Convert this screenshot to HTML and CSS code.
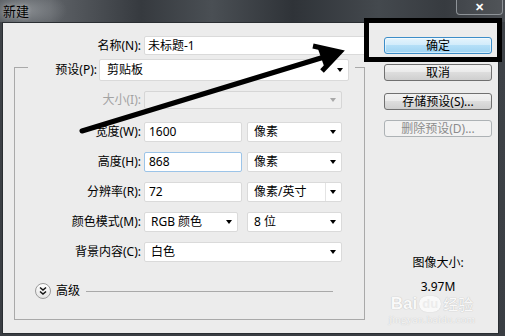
FILE: index.html
```html
<!DOCTYPE html>
<html lang="zh-CN">
<head>
<meta charset="utf-8">
<title>新建</title>
<link rel="stylesheet" href="styles.css">
</head>
<body>
<div class="window">
  <div class="titlebar">
    <span class="title">新建</span>
    <span class="close">✕</span>
  </div>
  <div class="client">
    <div class="main">
      <div class="row name-row">
        <span class="lbl lbl-wide">名称(N):</span>
        <div class="field name-field">未标题-1</div>
      </div>
      <div class="group">
        <div class="legend">
          <span class="legend-lbl">预设(P):</span>
          <div class="sel preset">剪贴板<i class="caret"></i></div>
        </div>
        <div class="row size-row">
          <span class="lbl disabled">大小(I):</span>
          <div class="sel sel-disabled w-full"><i class="caret caret-gray"></i></div>
        </div>
        <div class="row first-row">
          <span class="lbl">宽度(W):</span>
          <div class="field w-num">1600</div>
          <div class="sel w-unit">像素<i class="caret"></i></div>
        </div>
        <div class="row">
          <span class="lbl">高度(H):</span>
          <div class="field w-num focus">868</div>
          <div class="sel w-unit">像素<i class="caret"></i></div>
        </div>
        <div class="row">
          <span class="lbl">分辨率(R):</span>
          <div class="field w-num">72</div>
          <div class="sel w-unit">像素/英寸<span class="split"><i class="caret"></i></span></div>
        </div>
        <div class="row">
          <span class="lbl">颜色模式(M):</span>
          <div class="sel w-mode">RGB 颜色<i class="caret"></i></div>
          <div class="sel w-unit gap-bits">8 位<i class="caret"></i></div>
        </div>
        <div class="row">
          <span class="lbl">背景内容(C):</span>
          <div class="sel w-full">白色<i class="caret"></i></div>
        </div>
        <div class="adv-row">
          <span class="adv-btn">
            <svg width="10" height="10" viewBox="0 0 10 10"><path d="M2 1.5 L5 4 L8 1.5 M2 5.5 L5 8 L8 5.5" fill="none" stroke="#111" stroke-width="1.5"/></svg>
          </span>
          <span class="adv-text">高级</span>
          <span class="adv-line"></span>
        </div>
      </div>
    </div>
    <div class="side">
      <div class="btn ok">确定</div>
      <div class="btn b-cancel">取消</div>
      <div class="btn b-save">存储预设(S)...</div>
      <div class="btn b-del btn-disabled">删除预设(D)...</div>
      <div class="info">
        <div>图像大小:</div>
        <div class="info-val">3.97M</div>
      </div>
    </div>
  </div>
  <div class="watermark">
    <div class="wm-logo"><b>Bai</b><span class="wm-du">du</span><span class="wm-cn">经验</span></div>
    <div class="wm-url">jingyan.baidu.com</div>
  </div>
  <svg class="annot" width="505" height="336" viewBox="0 0 505 336">
    <rect x="366.5" y="20.5" width="133" height="39" fill="none" stroke="#000" stroke-width="5"/>
    <path d="M82 131 L334 54" stroke="#000" stroke-width="5" stroke-linecap="round" fill="none"/>
    <path d="M313 46 L340 52 L322 71" stroke="#000" stroke-width="5" stroke-linejoin="miter" fill="none"/>
    <polygon points="340,52 318,49 324,66" fill="#000"/>
  </svg>
</div>
</body>
</html>
```

FILE: styles.css
```css
html, body {
  margin: 0;
  padding: 0;
  background: #3b3f44;
}

.window {
  position: relative;
  width: 505px;
  height: 336px;
  overflow: hidden;
  display: flex;
  flex-direction: column;
  background: linear-gradient(180deg, #3f4348 0, #3a3e43 100%);
  font-family: "Noto Sans", "Noto Sans CJK SC", sans-serif;
  font-size: 12px;
  color: #000;
}

.titlebar {
  flex: none;
  height: 22px;
  display: flex;
  align-items: flex-start;
  background:
    radial-gradient(ellipse 45px 20px at 22px 10px, rgba(150,154,158,0.85), rgba(150,154,158,0) 100%),
    linear-gradient(90deg, #4b5055 0, #5e6267 10%, #363a3f 28%, #4a4f54 42%, #2f3338 58%, #44494e 75%, #373b40 88%, #4a4e53 100%);
}

.title {
  margin: 2px 0 0 3px;
  font-size: 13px;
  line-height: 18px;
  color: #000;
  text-shadow: 0 0 4px rgba(210,210,210,0.7);
}

.close {
  margin-left: auto;
  margin-right: 2px;
  width: 47px;
  height: 15px;
  box-sizing: border-box;
  border: 1px solid #8e9398;
  border-top: none;
  border-radius: 0 0 4px 4px;
  background: rgba(255,255,255,0.04);
  color: #fff;
  font-size: 11px;
  font-weight: bold;
  line-height: 13px;
  text-align: center;
}

.client {
  flex: 1;
  margin: 0 6px 2px 2px;
  border: 1px solid #2a2e32;
  background: #ececec;
  display: flex;
}

.main {
  flex: none;
  width: 381px;
}

.row {
  display: flex;
  align-items: center;
  height: 20px;
  margin-top: 10px;
  line-height: 16px;
}

.name-row {
  margin-top: 13px;
  height: 19px;
}

.lbl {
  flex: none;
  width: 126px;
  margin-right: 3px;
  text-align: right;
  white-space: nowrap;
}

.lbl-wide {
  width: 138px;
}

.disabled {
  color: #a3a3a3;
}

.field {
  box-sizing: border-box;
  height: 100%;
  background: #fff;
  border: 1px solid #dadada;
  border-radius: 2px;
  padding-left: 4px;
  display: flex;
  align-items: center;
  white-space: nowrap;
}

.field.focus {
  border-color: #9cc4e8;
}

.name-field {
  width: 222px;
  padding-left: 3px;
}

.w-num {
  width: 98px;
}

.sel {
  box-sizing: border-box;
  height: 100%;
  background: #fff;
  border: 1px solid #dadada;
  border-radius: 2px;
  padding-left: 6px;
  display: flex;
  align-items: center;
  white-space: nowrap;
}

.sel-disabled {
  background: #efefef;
  border-color: #d6d6d6;
}

.caret {
  width: 0;
  height: 0;
  margin-left: auto;
  margin-right: 5px;
  border-left: 3px solid transparent;
  border-right: 3px solid transparent;
  border-top: 4px solid #000;
}

.caret-gray {
  border-top-color: #a8a8a8;
}

.split {
  margin-left: auto;
  height: 100%;
  width: 15px;
  border-left: 1px solid #e4e4e4;
  display: flex;
  align-items: center;
}

.split .caret {
  margin-right: 5px;
}

.w-unit {
  width: 95px;
  margin-left: 5px;
}

.gap-bits {
  margin-left: 9px;
}

.w-mode {
  width: 94px;
}

.w-full {
  width: 198px;
}

.group {
  box-sizing: border-box;
  width: 351px;
  margin: 12px 0 0 11px;
  border: 1px solid #a9a9a9;
  padding-bottom: 20px;
}

.legend {
  width: 327px;
  height: 22px;
  margin: -9px 0 0 13px;
  background: #ececec;
  display: flex;
  align-items: center;
  line-height: 16px;
}

.legend-lbl {
  width: 69px;
  margin-right: 2px;
  text-align: right;
}

.preset {
  width: 250px;
  padding-left: 7px;
}

.size-row {
  height: 18px;
  margin-top: 10px;
}

.first-row {
  margin-top: 13px;
}

.adv-row {
  display: flex;
  align-items: center;
  height: 16px;
  margin: 21px 31px 0 20px;
  line-height: 16px;
}

.adv-btn {
  box-sizing: border-box;
  width: 16px;
  height: 16px;
  border-radius: 50%;
  border: 1px solid #9a9a9a;
  background: linear-gradient(#ffffff, #e4e4e4);
  display: flex;
  align-items: center;
  justify-content: center;
}

.adv-text {
  margin-left: 5px;
}

.adv-line {
  flex: 1;
  height: 1px;
  margin-left: 6px;
  background: #a9a9a9;
}

.side {
  flex: none;
  width: 108px;
  margin-top: 14px;
  display: flex;
  flex-direction: column;
}

.btn {
  box-sizing: border-box;
  height: 17px;
  border: 1px solid #707070;
  border-radius: 3px;
  background: linear-gradient(#f2f2f2 0, #ebebeb 45%, #dddddd 50%, #cfcfcf 100%);
  display: flex;
  align-items: center;
  justify-content: center;
  line-height: 15px;
  white-space: nowrap;
}

.btn.ok {
  border-color: #3c8dc8;
  background: linear-gradient(#e5f4fc 0, #d2ecfb 45%, #b4dff7 50%, #9fd3f2 100%);
  box-shadow: inset 0 0 0 1px rgba(255,255,255,0.5);
}

.b-cancel {
  margin-top: 10px;
}

.b-save {
  margin-top: 12px;
}

.b-del {
  margin-top: 10px;
}

.btn-disabled {
  border-color: #adb2b5;
  background: #f2f2f2;
  color: #8c8c8c;
}

.info {
  margin-top: 118px;
  text-align: center;
  line-height: 16px;
}

.info-val {
  margin-top: 8px;
}

.watermark {
  position: absolute;
  left: 384px;
  top: 295px;
  width: 96px;
  text-align: center;
  color: #f9f9f9;
  text-shadow: 0 0 1px #c4c4c4, 0 0 1px #c4c4c4;
  pointer-events: none;
}

.wm-logo {
  font-family: "Liberation Sans", "Noto Sans CJK SC", sans-serif;
  font-size: 17px;
  line-height: 18px;
  display: flex;
  align-items: center;
  justify-content: center;
}

.wm-du {
  font-family: "Liberation Sans", sans-serif;
  font-weight: bold;
  font-size: 13px;
  line-height: 14px;
  margin: 0 2px;
  padding: 1px 3px;
  border-radius: 8px;
  color: #ececec;
  background: #f9f9f9;
  text-shadow: none;
  box-shadow: 0 0 1px #c4c4c4;
}

.wm-cn {
  font-family: "Noto Sans CJK SC", sans-serif;
  font-size: 15px;
}

.wm-url {
  font-family: "Liberation Serif", serif;
  font-size: 11px;
  line-height: 12px;
  letter-spacing: 0.3px;
  color: #f6f6f6;
  text-shadow: 0 0 1px #b8b8b8;
}

.annot {
  position: absolute;
  left: 0;
  top: 0;
  pointer-events: none;
}
```
